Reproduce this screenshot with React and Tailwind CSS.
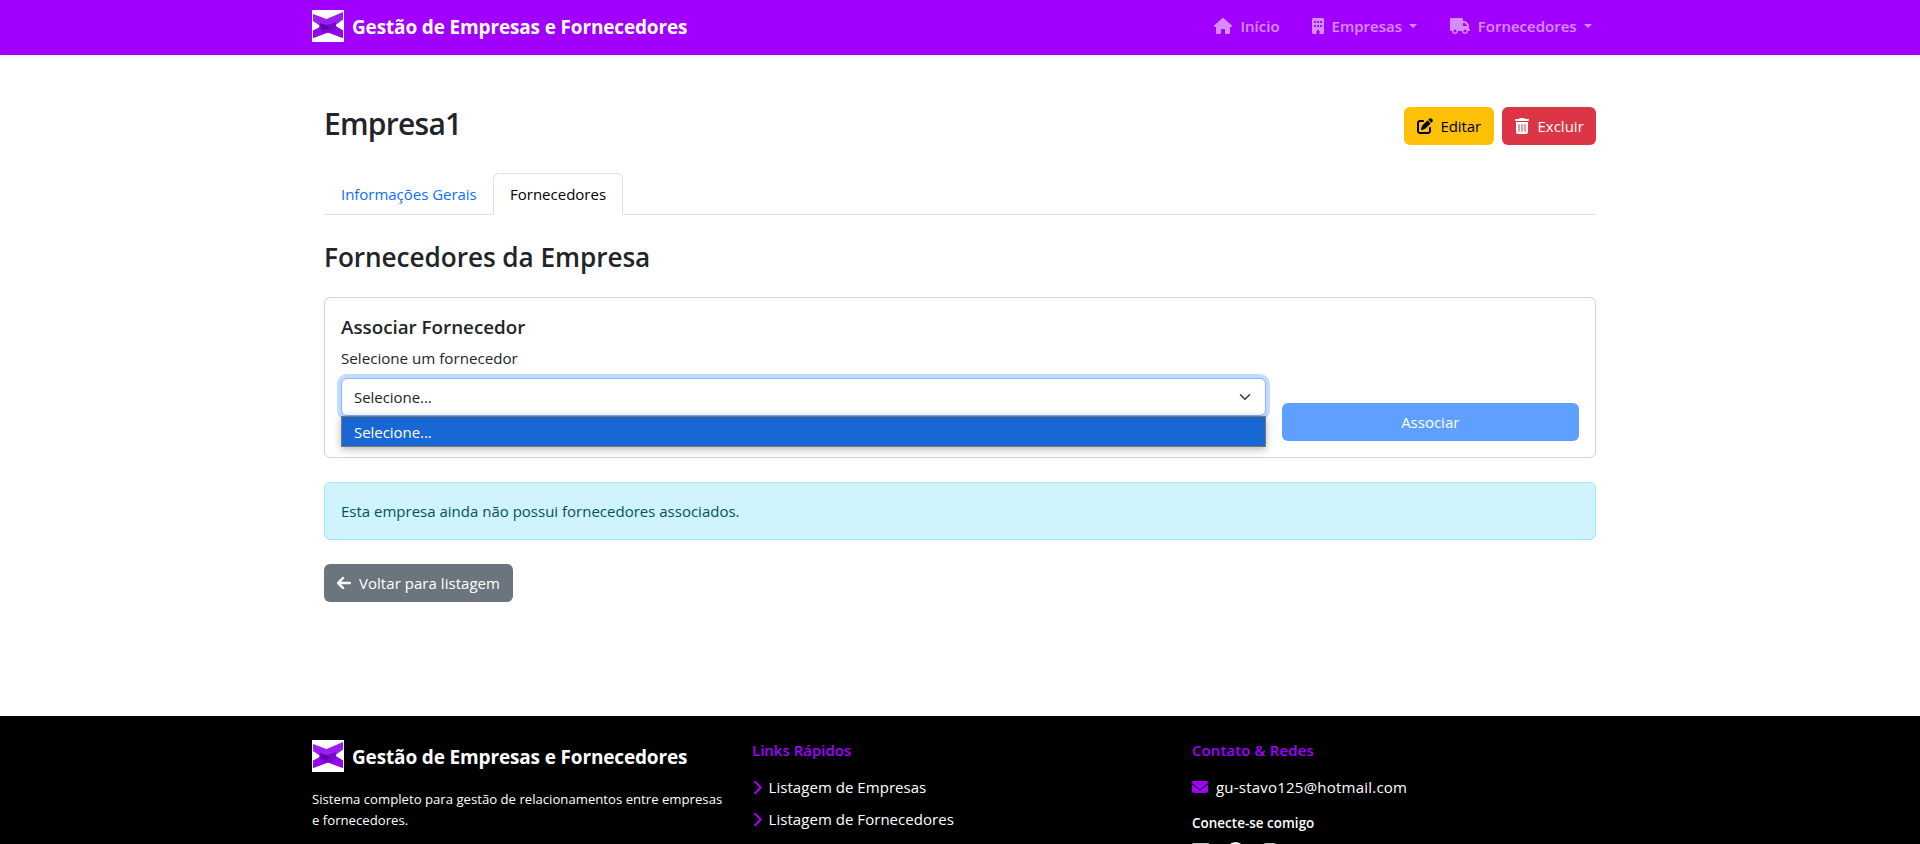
import React from "react";
import {
  FaHouse,
  FaBuilding,
  FaTruck,
  FaPenToSquare,
  FaTrashCan,
  FaArrowLeft,
  FaChevronRight,
  FaEnvelope,
  FaLinkedin,
  FaGithub,
  FaInstagram,
} from "react-icons/fa6";

function Logo() {
  return (
    <svg viewBox="0 0 32 32" className="h-8 w-8 shrink-0 bg-white">
      <polygon points="1,20.5 9,16.5 1,11 1,4 14.5,9 31,2 31,9.5 23,15.5 31,20.5 31,28 16,22.5 1,28" fill="#9c1ff2" />
      <polygon points="1,21 9,17 23,16 31,20.5 31,28 16,22.5 1,28" fill="#9408ec" />
      <polygon points="8,13 15,15 24,12 24,17 22,21 16,22.5 10,22 7,18" fill="#7a08cf" />
      <polygon points="9,14 15,15.5 18,18 13,20 9,18" fill="#5c06a8" />
    </svg>
  );
}

function Brand() {
  return (
    <div className="flex h-8 items-start gap-2 text-white">
      <Logo />
      <span className="mt-[3px] text-[19px] leading-[28px] font-bold tracking-[-0.15px] whitespace-nowrap">
        Gestão de Empresas e Fornecedores
      </span>
    </div>
  );
}

function Caret() {
  return (
    <svg viewBox="0 0 96 48" className="mr-[0.8px] ml-[7px] h-[4px] w-[8px]" fill="currentColor">
      <polygon points="0,0 96,0 48,48" />
    </svg>
  );
}

function Navbar() {
  return (
    <header className="relative h-[55px] shrink-0 bg-[#a100ff] pb-[3px] shadow-[0_2px_4px_rgba(0,0,0,0.075)]">
      <div className="mx-auto flex h-full w-[1296px] items-center justify-between">
        <Brand />
        <nav className="flex items-center gap-8 pr-[15.6px] leading-6 font-semibold text-white/55">
          <a className="flex items-center gap-2">
            <FaHouse className="h-4 w-[18px]" />
            Início
          </a>
          <a className="flex items-center">
            <FaBuilding className="mr-2 h-4 w-3" />
            Empresas
            <Caret />
          </a>
          <a className="flex items-center">
            <FaTruck className="mr-2 h-4 w-5" />
            Fornecedores
            <Caret />
          </a>
        </nav>
      </div>
    </header>
  );
}

function SupplierForm() {
  return (
    <section className="mt-[23px] h-[161px] rounded-md border border-[#d2d2d2] p-4">
      <h5 className="-mb-0.5 text-[18.8px] leading-[26px] font-semibold">Associar Fornecedor</h5>
      <div className="mt-2 flex h-[95px] gap-4">
        <div className="w-[924.5px]">
          <label className="block text-[15.15px] leading-6">Selecione um fornecedor</label>
          <div className="relative mt-2">
            <div className="flex h-[38px] items-center justify-between rounded-md border border-[#86b7fe] bg-white px-3 leading-6 shadow-[0_0_0_4px_#c2dbfe]">
              <span className="tracking-[-0.05px]">Selecione...</span>
              <svg viewBox="0 0 16 16" className="mr-0.5 h-3 w-3" fill="none" stroke="#343a40" strokeWidth="2" strokeLinecap="round" strokeLinejoin="round">
                <path d="m2 5 6 6 6-6" />
              </svg>
            </div>
            <div className="absolute top-[38px] left-0 h-[31px] w-full border border-[#767676] bg-[#1967d2] px-3 pt-[3px] leading-6 tracking-[-0.05px] text-white shadow-[0_2px_8px_rgba(0,0,0,0.3)]">
              Selecione...
            </div>
          </div>
        </div>
        <button className="h-[38px] flex-1 self-end rounded-md bg-[#5f9fff] text-center leading-6 text-white">
          Associar
        </button>
      </div>
    </section>
  );
}

function Main() {
  return (
    <main className="mx-auto h-[661px] w-[1296px] shrink-0 px-3 pt-[49px]">
      <div className="flex h-[41px] items-start justify-between">
        <h1 className="text-[30px] leading-[39px] font-semibold tracking-[-0.75px]">Empresa1</h1>
        <div className="mt-[3px] flex gap-2 leading-6">
          <button className="flex h-[38px] w-[90px] items-center gap-2 rounded-md bg-[#ffc107] pl-[12.5px] tracking-[-0.1px] text-black">
            <FaPenToSquare className="h-4 w-4" />
            Editar
          </button>
          <button className="flex h-[38px] w-[94px] items-center gap-2 rounded-md bg-[#dc3545] pl-[13px] text-white">
            <FaTrashCan className="mr-[0.5px] h-4 w-[14px]" />
            Excluir
          </button>
        </div>
      </div>

      <div className="mt-7 flex h-[42px] border-b border-[#dee2e6] leading-6">
        <a className="w-[169px] py-[9px] pl-[17px] tracking-[-0.03px] text-[#0d6efd]">Informações Gerais</a>
        <a className="h-[42px] w-[130px] rounded-t-md border border-[#dee2e6] border-b-white bg-white py-2 pl-4 text-black">
          Fornecedores
        </a>
      </div>

      <h3 className="mt-[25px] text-[26.2px] leading-[34px] font-semibold tracking-[-0.07px]">
        Fornecedores da Empresa
      </h3>
      <SupplierForm />

      <div className="mt-6 rounded-md border border-[#9eeaf9] bg-[#cff4fc] p-4 leading-6 text-[#055160]">
        Esta empresa ainda não possui fornecedores associados.
      </div>

      <button className="mt-6 flex h-[38px] w-[189px] items-center gap-2 rounded-md bg-[#6c757d] pl-[13px] leading-6 tracking-[0.04px] text-white">
        <FaArrowLeft className="h-4 w-[14px] stroke-current stroke-[16px]" />
        Voltar para listagem
      </button>
    </main>
  );
}

function Footer() {
  return (
    <footer className="flex-1 bg-black pt-6 text-white">
      <div className="mx-auto grid w-[1296px] grid-cols-[440px_440px_1fr]">
        <div>
          <Brand />
          <p className="mt-[17px] text-[13.17px] leading-[21px] whitespace-nowrap">
            Sistema completo para gestão de relacionamentos entre empresas
            <br />e fornecedores.
          </p>
        </div>
        <div>
          <h6 className="leading-5 font-semibold text-[#a100ff]">Links Rápidos</h6>
          <ul className="mt-[15px] flex flex-col gap-2 leading-6">
            {["Listagem de Empresas", "Listagem de Fornecedores"].map((label) => (
              <li key={label} className="flex items-center gap-[6.6px] tracking-[0.04px]">
                <FaChevronRight className="h-[15px] w-[10px] stroke-current stroke-[12px] text-[#a100ff]" />
                {label}
              </li>
            ))}
          </ul>
        </div>
        <div>
          <h6 className="leading-5 font-semibold tracking-[0.1px] text-[#a100ff]">Contato &amp; Redes</h6>
          <div className="mt-[15px] flex items-center gap-2 leading-6">
            <FaEnvelope className="h-4 w-4 text-[#a100ff]" />
            <span className="tracking-[0.22px]">gu-stavo125@hotmail.com</span>
          </div>
          <div className="mt-[15px] text-[13.4px] leading-[18px] font-semibold tracking-[0.05px]">
            Conecte-se comigo
          </div>
          <div className="mt-[10.3px] flex gap-4">
            <FaLinkedin className="h-5 w-[17.5px]" />
            <FaGithub className="h-5 w-[19.4px]" />
            <FaInstagram className="h-5 w-[17.5px]" />
          </div>
        </div>
      </div>
    </footer>
  );
}

export default function App() {
  return (
    <div className="flex h-[844px] flex-col overflow-hidden bg-white font-['Open_Sans','Noto_Sans',sans-serif] text-[15px] text-[#212529]">
      <Navbar />
      <Main />
      <Footer />
    </div>
  );
}
